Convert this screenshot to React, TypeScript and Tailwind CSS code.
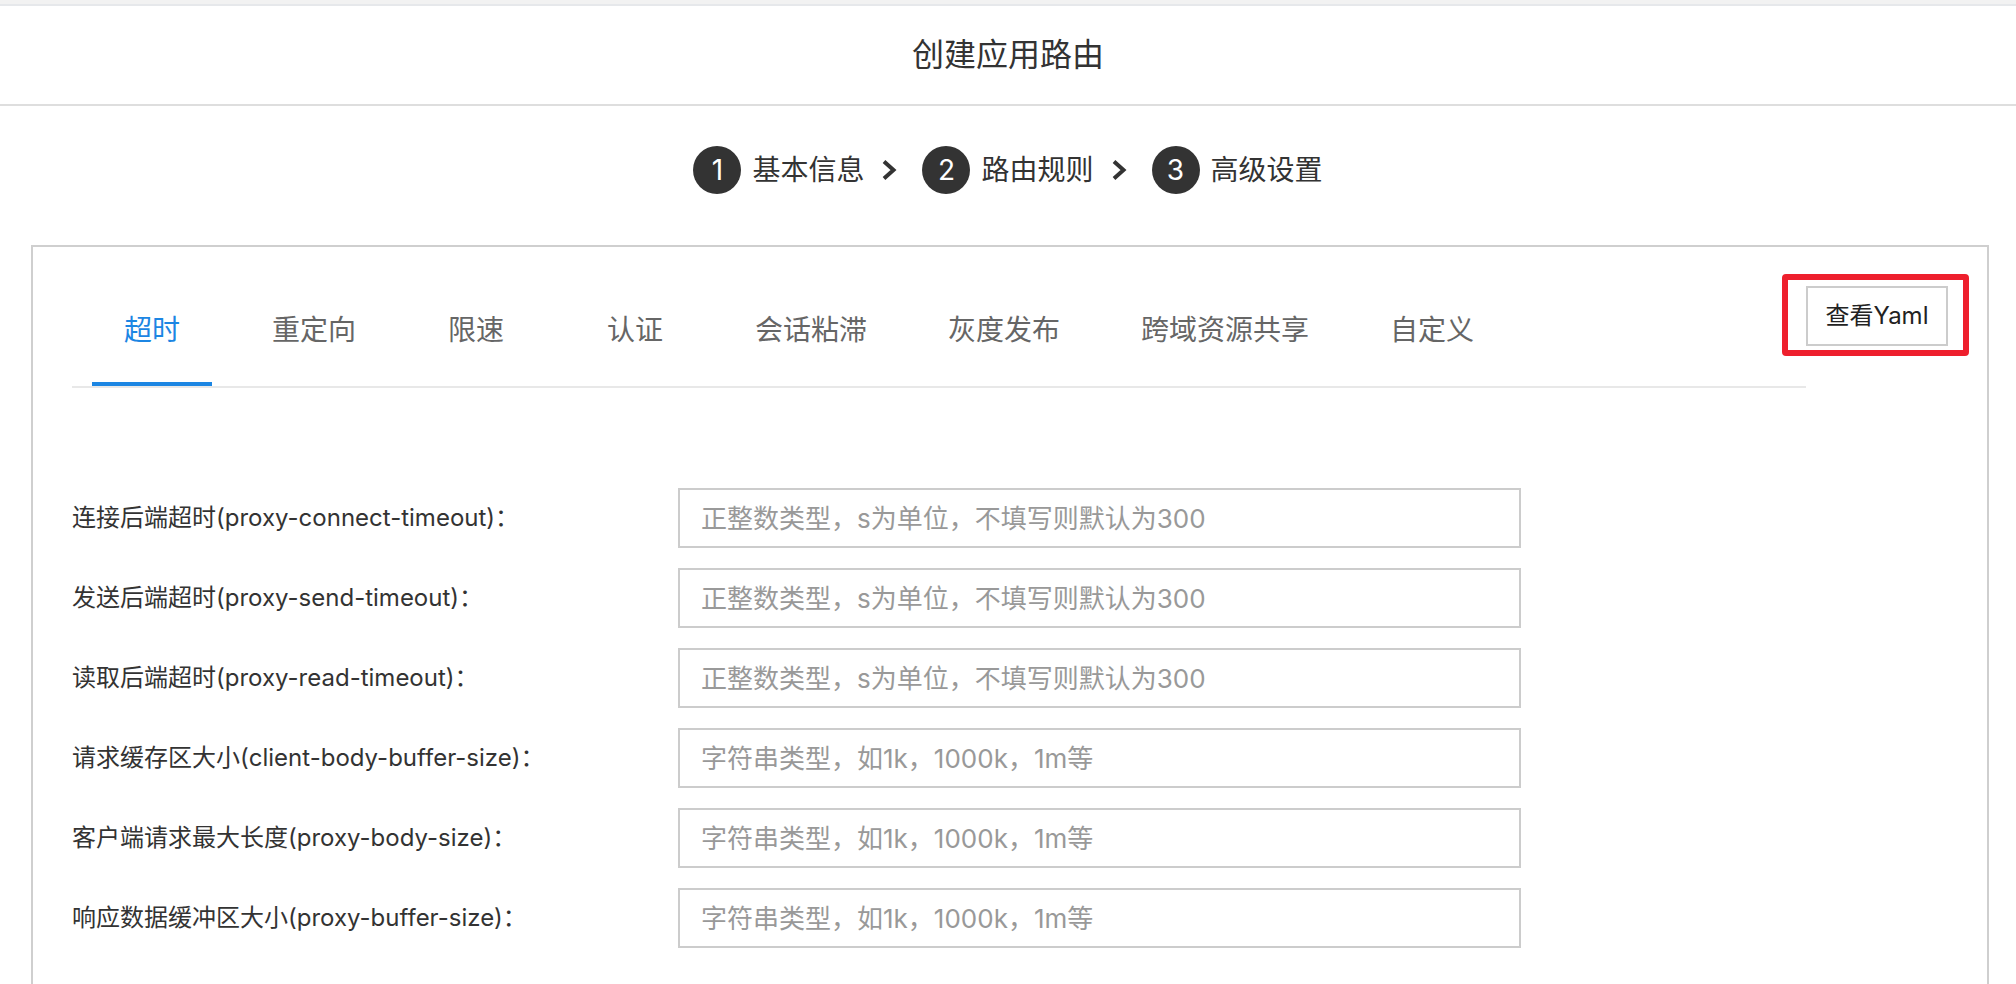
import React from "react";

const steps = ["基本信息", "路由规则", "高级设置"];

const tabs = ["超时", "重定向", "限速", "认证", "会话粘滞", "灰度发布", "跨域资源共享", "自定义"];

const intHint = "正整数类型，s为单位，不填写则默认为300";
const sizeHint = "字符串类型，如1k，1000k，1m等";

const fields = [
  { label: "连接后端超时(proxy-connect-timeout)：", hint: intHint },
  { label: "发送后端超时(proxy-send-timeout)：", hint: intHint },
  { label: "读取后端超时(proxy-read-timeout)：", hint: intHint },
  { label: "请求缓存区大小(client-body-buffer-size)：", hint: sizeHint },
  { label: "客户端请求最大长度(proxy-body-size)：", hint: sizeHint },
  { label: "响应数据缓冲区大小(proxy-buffer-size)：", hint: sizeHint },
];

function Chevron() {
  return (
    <svg width="16" height="22" viewBox="0 0 16 22" className="shrink-0">
      <polyline points="3,2.5 12.5,11 3,19.5" fill="none" stroke="#333" strokeWidth="4" />
    </svg>
  );
}

function Steps() {
  return (
    <div className="flex items-center justify-center pt-[40px] pb-[51px]">
      {steps.map((s, i) => (
        <div key={s} className="flex items-center">
          <div className="w-[48px] h-[48px] rounded-full bg-[#333] text-white text-[28px] flex items-center justify-center">
            {i + 1}
          </div>
          <span className="ml-[11px] text-[28px] leading-[40px] text-[#333]">{s}</span>
          {i < steps.length - 1 && (
            <div className="flex items-center ml-[17px] mr-[25px]">
              <Chevron />
            </div>
          )}
        </div>
      ))}
    </div>
  );
}

export default function App() {
  const active = 0;

  return (
    <div className="min-h-screen bg-white text-[#333] font-[family-name:Inter,'Noto_Sans_CJK_SC',sans-serif]">
      {/* top strip */}
      <div className="h-[6px] bg-[#f2f2f2] border-b-2 border-[#e6e8eb]" />

      {/* title */}
      <header className="h-[100px] border-b-2 border-[#dedede] flex items-center justify-center">
        <h1 className="text-[32px] text-[#333]">创建应用路由</h1>
      </header>

      <Steps />

      {/* panel */}
      <div className="ml-[31px] mr-[27px] border-2 border-[#cfcfcf] bg-white px-[39px] pt-[39px] pb-[40px]">
        <div className="flex items-start">
          <div className="flex-1 flex gap-[39px] pl-[20px] border-b-2 border-[#e8e8e8]">
            {tabs.map((t, i) => (
              <div
                key={t}
                className={`min-w-[120px] px-[21px] pt-[24px] pb-[32px] border-b-4 text-center text-[28px] leading-[40px] whitespace-nowrap ${
                  i === active ? "border-[#1c86e3] text-[#1c86e3]" : "border-transparent text-[#666]"
                }`}
              >
                {t}
              </div>
            ))}
          </div>

          <button
            type="button"
            className="relative w-[142px] h-[60px] border-2 border-[#cccccc] bg-white text-[24px] text-[#222]"
          >
            查看Yaml
            {/* annotation highlight */}
            <span className="absolute -left-[26px] -top-[14px] -right-[23px] -bottom-[12px] border-[6px] border-[#ee1f2d] rounded-[4px] pointer-events-none" />
          </button>
        </div>

        {/* form */}
        <div className="mt-[100px] flex flex-col gap-[20px]">
          {fields.map((f) => (
            <div key={f.label} className="flex items-center">
              <label className="w-[606px] shrink-0 text-[24px] text-[#333] whitespace-nowrap">{f.label}</label>
              <input
                type="text"
                placeholder={f.hint}
                className="w-[843px] h-[60px] border-2 border-[#cccccc] px-[21px] text-[26px] text-[#333] placeholder:text-[#999] outline-none"
              />
            </div>
          ))}
        </div>
      </div>
    </div>
  );
}
